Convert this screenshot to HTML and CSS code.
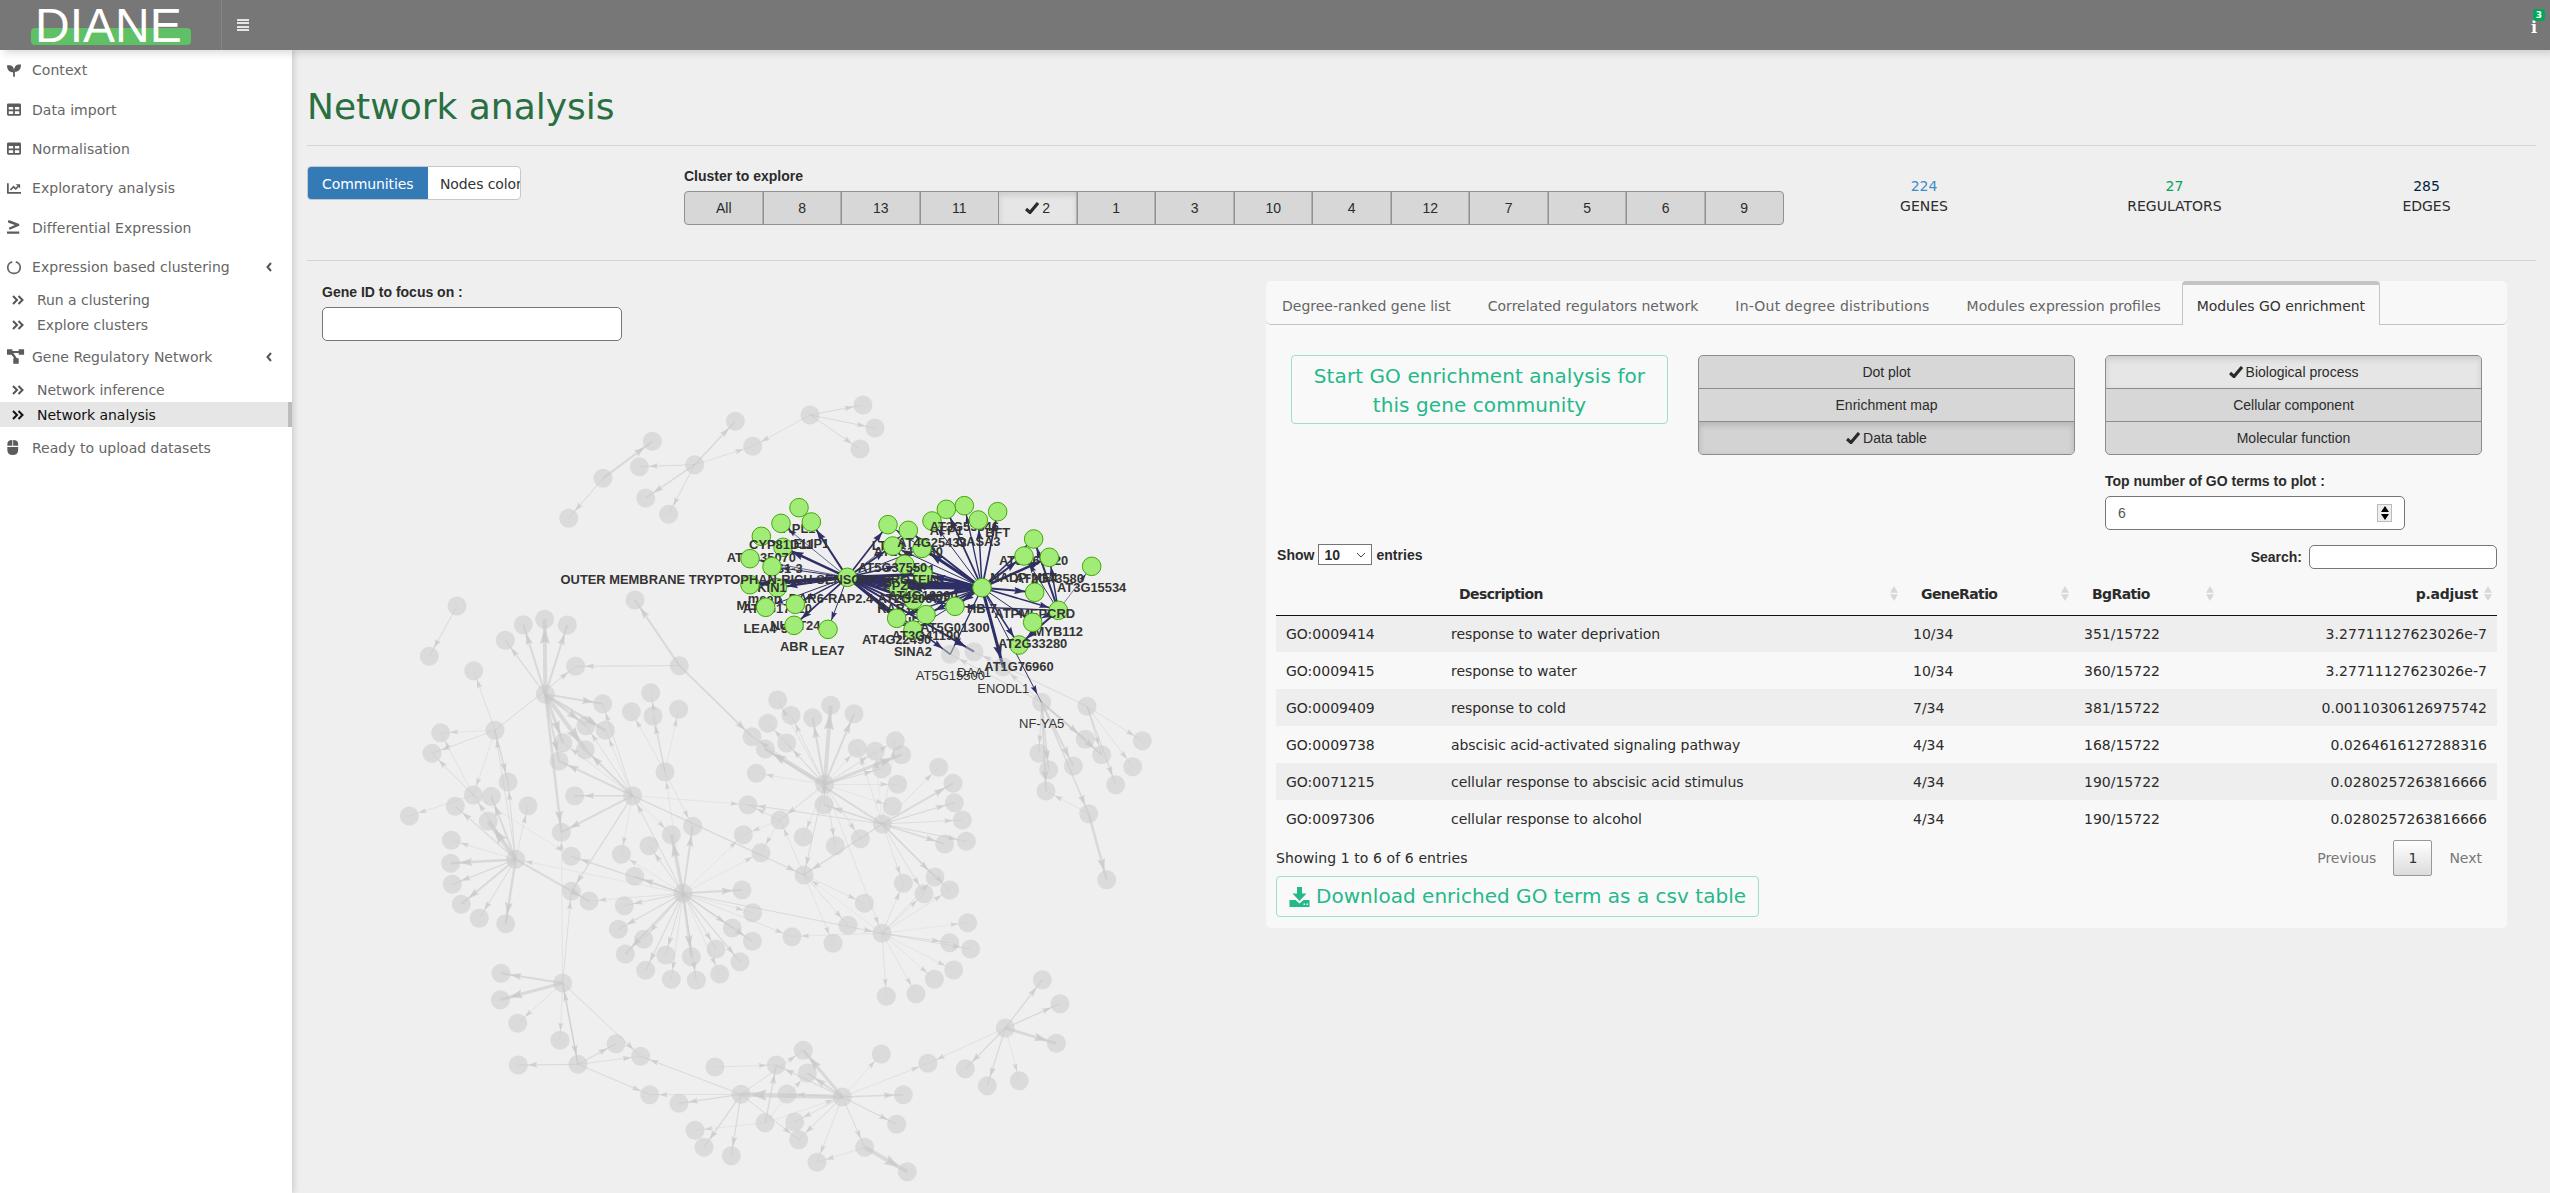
FILE: index.html
```html
<!DOCTYPE html>
<html lang="en">
<head>
<meta charset="utf-8">
<title>DIANE</title>
<link rel="stylesheet" href="styles.css">
</head>
<body>
<header class="topbar">
  <div class="logo"><span class="logo-text">DIANE</span></div>
  <div class="burger"><i></i><i></i><i></i><i></i></div>
  <div class="info"><b>i</b><span class="badge">3</span></div>
</header>
<div class="shell">
  <nav class="sidebar">
    <a class="item"><svg class="ico" viewBox="0 0 16 16"><path d="M0 2h2.500C6 2 8 4.500 8 8c0-4 2-7 6-7h2c0 5-2 8-7 8.500V15H7v-5C2.500 10 0 7 0 2z"/></svg>Context</a>
    <a class="item"><svg class="ico" viewBox="0 0 16 16"><path fill-rule="evenodd" d="M1.500 1h13Q16 1 16 2.500v11q0 1.500-1.500 1.500h-13Q0 15 0 13.500v-11Q0 1 1.500 1zM2 5v3h5V5zm7 0v3h5V5zM2 10v3h5v-3zm7 0v3h5v-3z"/></svg>Data import</a>
    <a class="item"><svg class="ico" viewBox="0 0 16 16"><path fill-rule="evenodd" d="M1.500 1h13Q16 1 16 2.500v11q0 1.500-1.500 1.500h-13Q0 15 0 13.500v-11Q0 1 1.500 1zM2 5v3h5V5zm7 0v3h5V5zM2 10v3h5v-3zm7 0v3h5v-3z"/></svg>Normalisation</a>
    <a class="item"><svg class="ico" viewBox="0 0 16 16"><path d="M0 2h2v10h14v2H0zM10 3h5v5l-1.600-1.600L10 9.800 7.500 7.300 4.500 10.300 3.200 9l4.300-4.300L10 7.200l2-2z"/></svg>Exploratory analysis</a>
    <a class="item"><svg class="ico" viewBox="0 0 16 16"><path d="M1 1l1-1.500 12 4.500v2L3 10.500 2 8.200 9 5 1.500 2.500zM0 12.500h14V15H0z"/></svg>Differential Expression</a>
    <a class="item"><svg class="ico" viewBox="0 0 16 16"><path class="line" d="M6 1.500A6.700 6.700 0 0 0 8 14.700A6.700 6.700 0 0 0 10 1.500"/></svg>Expression based clustering<svg class="chev" viewBox="0 0 6 10"><path d="M5 1L1.500 5 5 9"/></svg></a>
    <div class="subs">
      <a class="sub"><svg class="dbl" viewBox="0 0 12 10"><path d="M1 1l4 4-4 4M6.500 1l4 4-4 4"/></svg>Run a clustering</a>
      <a class="sub"><svg class="dbl" viewBox="0 0 12 10"><path d="M1 1l4 4-4 4M6.500 1l4 4-4 4"/></svg>Explore clusters</a>
    </div>
    <a class="item"><svg class="ico wide" viewBox="0 0 20 16"><path d="M0 0h6v2h7V0h6v6h-6V4H7l4 6h2v6H7v-6h1L5 6H0z"/></svg>Gene Regulatory Network<svg class="chev" viewBox="0 0 6 10"><path d="M5 1L1.500 5 5 9"/></svg></a>
    <div class="subs">
      <a class="sub"><svg class="dbl" viewBox="0 0 12 10"><path d="M1 1l4 4-4 4M6.500 1l4 4-4 4"/></svg>Network inference</a>
      <a class="sub active"><svg class="dbl" viewBox="0 0 12 10"><path d="M1 1l4 4-4 4M6.500 1l4 4-4 4"/></svg>Network analysis</a>
    </div>
    <a class="item last"><svg class="ico" viewBox="0 0 16 18"><path d="M0 7V5q0-5 6-5v7zM7 0q6 0 6 5v2H7zM0 8.500h13V12q0 6-6.500 6T0 12z"/></svg>Ready to upload datasets</a>
  </nav>
  <main class="content">
    <h1>Network analysis</h1>
    <section class="controls">
      <div class="toggle"><span class="on">Communities</span><span>Nodes color</span></div>
      <div class="cluster">
        <label>Cluster to explore</label>
        <div class="btn-row">
          <span>All</span><span>8</span><span>13</span><span>11</span><span class="sel"><svg class="check" viewBox="0 0 14 12"><path d="M1 7l4 3.500L13 1"/></svg>2</span><span>1</span><span>3</span><span>10</span><span>4</span><span>12</span><span>7</span><span>5</span><span>6</span><span>9</span>
        </div>
      </div>
      <div class="stats">
        <div><span class="blue">224</span>GENES</div>
        <div><span class="green">27</span>REGULATORS</div>
        <div><span class="navy">285</span>EDGES</div>
      </div>
    </section>
    <section class="work">
      <div class="graph">
        <label>Gene ID to focus on :</label>
        <input class="field">
        <svg id="network" viewBox="307 361 950 832" width="950" height="832"></svg>
      </div>
      <div class="panel">
        <div class="tabs">
          <a>Degree-ranked gene list</a><a>Correlated regulators network</a><a class="loose">In-Out degree distributions</a><a>Modules expression profiles</a><a class="current">Modules GO enrichment</a>
        </div>
        <div class="options">
          <button class="action">Start GO enrichment analysis for this gene community</button>
          <div class="stack"><span>Dot plot</span><span>Enrichment map</span><span class="pressed"><svg class="check" viewBox="0 0 14 12"><path d="M1 7l4 3.500L13 1"/></svg>Data table</span></div>
          <div>
            <div class="stack"><span class="sel"><svg class="check" viewBox="0 0 14 12"><path d="M1 7l4 3.500L13 1"/></svg>Biological process</span><span>Cellular component</span><span>Molecular function</span></div>
            <label>Top number of GO terms to plot :</label>
            <div class="field number">6<span class="spin"><i class="up"></i><i class="down"></i></span></div>
          </div>
        </div>
        <div class="filter">
          <div class="length">Show <span class="select">10<svg viewBox="0 0 10 6"><path d="M1 1l4 4 4-4"/></svg></span> entries</div>
          <div class="search">Search:<input></div>
        </div>
        <table>
          <thead><tr><th></th><th>Description<i class="sort"></i></th><th>GeneRatio<i class="sort"></i></th><th>BgRatio<i class="sort"></i></th><th class="num">p.adjust<i class="sort"></i></th></tr></thead>
          <tbody>
            <tr><td>GO:0009414</td><td>response to water deprivation</td><td>10/34</td><td>351/15722</td><td class="num">3.27711127623026e-7</td></tr>
            <tr><td>GO:0009415</td><td>response to water</td><td>10/34</td><td>360/15722</td><td class="num">3.27711127623026e-7</td></tr>
            <tr><td>GO:0009409</td><td>response to cold</td><td>7/34</td><td>381/15722</td><td class="num">0.00110306126975742</td></tr>
            <tr><td>GO:0009738</td><td>abscisic acid-activated signaling pathway</td><td>4/34</td><td>168/15722</td><td class="num">0.0264616127288316</td></tr>
            <tr><td>GO:0071215</td><td>cellular response to abscisic acid stimulus</td><td>4/34</td><td>190/15722</td><td class="num">0.0280257263816666</td></tr>
            <tr><td>GO:0097306</td><td>cellular response to alcohol</td><td>4/34</td><td>190/15722</td><td class="num">0.0280257263816666</td></tr>
          </tbody>
        </table>
        <div class="foot">
          <span>Showing 1 to 6 of 6 entries</span>
          <div class="pager"><span>Previous</span><b>1</b><span>Next</span></div>
        </div>
        <button class="download"><svg viewBox="0 0 20 20"><path fill-rule="evenodd" d="M7.500 0h5v6.500H17L10 14 3 6.500h4.500zM0 13h6l4 3.500 4-3.500h6v7H0zM14 16.500v1.500h1.500v-1.500zm3 0v1.500h1.500v-1.500z"/></svg>Download enriched GO term as a csv table</button>
      </div>
    </section>
  </main>
</div>
<script src="network.js"></script>
</body>
</html>
```
FILE: styles.css
```css
* { box-sizing: border-box; }
body { margin: 0; height: 1193px; overflow: hidden; background: #efefef; color: #2b2b2b; font: 14px/20px "DejaVu Sans", Verdana, sans-serif; }
label, .length, .search { font-family: "Liberation Sans", Arial, sans-serif; font-weight: bold; }
label { display: block; }

.topbar { position: relative; z-index: 2; display: flex; align-items: center; height: 50px; background: #777; box-shadow: 4px 3px 8px rgba(0,0,0,.15); }
.logo { width: 222px; height: 50px; padding-left: 31px; border-right: 1px solid #858585; }
.logo::before { content: ""; display: block; width: 160px; height: 17px; margin-top: 28px; border-radius: 4px; background: #5fc065; }
.logo-text { position: relative; top: -44px; left: 4px; display: block; font: 48px/50px "Liberation Sans", Arial, sans-serif; color: #fff; }
.burger { display: grid; gap: 1.500px; width: 12px; margin-left: 15px; }
.burger i { height: 2px; background: #e4e4e4; }
.info { position: relative; margin: 5px 13px 0 auto; color: #fff; font: bold 16px/16px "DejaVu Serif", serif; }
.badge { position: absolute; left: 2px; top: -11px; width: 12px; height: 12px; border-radius: 3px; background: #00a65a; font: bold 9px/12px "DejaVu Sans", sans-serif; text-align: center; }

.shell { display: grid; grid-template-columns: 292px minmax(0, 1fr); height: 1143px; }
.sidebar { background: #fff; box-shadow: 2px 0 6px rgba(0,0,0,.15); color: #666; }
.item { display: flex; align-items: center; height: 39.400px; padding-left: 7px; padding-top: 1px; letter-spacing: .05px; }
.ico { width: 14px; height: 15px; margin-right: 11px; fill: #5c5c5c; overflow: visible; }
.ico.wide { width: 18px; margin-right: 7px; }
.line { fill: none; stroke: #666; stroke-width: 2; }
.chev { width: 6px; height: 10px; margin-left: auto; margin-right: 20px; fill: none; stroke: #555; stroke-width: 2; }
.subs { height: 51px; padding-top: 1px; }
.subs + .item { height: 39px; padding-top: 0; letter-spacing: 0; }
.sub { display: flex; align-items: center; height: 25px; padding-left: 12px; letter-spacing: -.05px; }
.subs + .last { padding-top: 2px; }
.dbl { width: 12px; height: 10px; margin-right: 13px; fill: none; stroke: #555; stroke-width: 2; }
.sub.active { background: #e6e6e6; border-right: 4px solid #bcbcbc; color: #111; }
.active .dbl { stroke: #111; }

.content { padding: 0 14px 0 15px; }
h1 { height: 96px; margin: 0; padding-top: 37px; border-bottom: 1px solid #d4d4d4; font-size: 36px; font-weight: normal; line-height: 40px; color: #2a6f42; }
.controls { display: grid; grid-template-columns: 377px 1100px 1fr; height: 115px; border-bottom: 1px solid #d4d4d4; }
.toggle { display: flex; width: 214px; height: 34px; margin-top: 20px; border: 1px solid #c8c8c8; border-radius: 4px; background: #fff; overflow: hidden; line-height: 34px; white-space: nowrap; }
.toggle span { padding-left: 12px; letter-spacing: -.1px; color: #333; }
.toggle .on { flex: 0 0 120px; padding-left: 14px; background: #337ab7; color: #fff; letter-spacing: -.1px; }
.cluster label { margin: 20px 0 5px; }
.btn-row { display: flex; height: 34px; border: 1px solid #929292; border-radius: 4px; background: #d7d7d7; overflow: hidden; font: 14px/32px "Liberation Sans", Arial, sans-serif; }
.btn-row span { flex: 1 1 0; text-align: center; border-left: 1px solid #929292; box-shadow: -1px 0 0 #b0b0b0; }
.btn-row span:first-child { border: 0; }
.btn-row .sel, .stack .sel { background: #e6e6e6; box-shadow: inset 0 3px 6px rgba(0,0,0,.12); }
.check { width: 14px; height: 12px; margin-right: 3px; vertical-align: -1px; fill: none; stroke: #2b2b2b; stroke-width: 3.200; }
.stats { display: grid; grid-template-columns: 280px 221px 283px; width: 784px; padding-top: 30px; text-align: center; }
.stats span { display: block; }
.blue { color: #428bca; } .green { color: #00a65a; } .navy { color: #001f3f; }

.work { display: grid; grid-template-columns: 959px 1241px; padding-top: 20px; }
.graph label { margin: 1px 0 5px 15px; }
.field { display: block; width: 300px; height: 34px; border: 1px solid #767676; border-radius: 5px; background: #fff; }
.graph .field { margin-left: 15px; }
#network { display: block; margin-top: 20px; }
.nlabel { font: bold 12.900px "Liberation Sans", Arial, sans-serif; fill: #343434; text-anchor: middle; }
.nlabel.thin { font-weight: normal; font-size: 13px; }
.node { fill: rgba(200,200,200,.5); }
.node.hot { fill: #a1ec76; stroke: #41a906; }
.edge { stroke: #c8c8c8; opacity: .55; }
.edge.hot { stroke: #2f2f67; opacity: 1; }
.tip { fill: #c8c8c8; opacity: .7; }
.tip.hot { fill: #2f2f67; opacity: 1; }

.panel { height: 647px; border-radius: 5px; background: #f8f8f8; }
.tabs { display: flex; gap: 5px; height: 44px; border-bottom: 1px solid #c4c4c4; border-radius: 5px; color: #666; white-space: nowrap; }
.tabs a { height: 43px; padding: 15px 16px 0; letter-spacing: 0; }
.tabs .loose { letter-spacing: .2px; }
.tabs .current { height: 44px; padding: 11px 14px 0; border: 1px solid #c4c4c4; border-top-width: 4px; border-bottom: 0; border-radius: 4px 4px 0 0; background: #f8f8f8; color: #333; letter-spacing: -.05px; }
.options { display: grid; grid-template-columns: 377px 377px 377px; column-gap: 30px; height: 205px; padding: 30px 0 0 25px; align-items: start; }
button { font: 20px/29px "DejaVu Sans", Verdana, sans-serif; color: #25b88a; border: 1px solid #9fdec8; border-radius: 4px; background: #f9f9f9; }
.action { height: 69px; padding: 5px 15px 3px; letter-spacing: .08px; }
.stack { border: 1px solid #8c8c8c; border-radius: 5px; background: #d7d7d7; overflow: hidden; text-align: center; font: 14px/32px "Liberation Sans", Arial, sans-serif; }
.stack span { display: block; height: 33px; border-bottom: 1px solid #8c8c8c; }
.stack span:last-child { height: 32px; border: 0; }
.stack .pressed { background: #d3d3d3; box-shadow: inset 0 3px 6px rgba(0,0,0,.15); }
.options label { margin: 16px 0 5px; }
.number { display: flex; justify-content: space-between; align-items: center; padding: 0 12px; color: #555; font: 14px "Liberation Sans", Arial, sans-serif; }
.spin { display: grid; gap: 2px; width: 15px; padding: 1px 0; justify-items: center; border: 1px solid #bbb; background: #eee; }
.spin i { border: 4px solid transparent; }
.up { border-top: 0 !important; border-bottom: 6px solid #000 !important; }
.down { border-bottom: 0 !important; border-top: 6px solid #000 !important; }
.filter { display: flex; justify-content: space-between; height: 44px; padding: 15px 10px 0 11px; }
.length { margin-top: -1px; letter-spacing: .05px; }
.select { display: inline-flex; align-items: center; justify-content: space-between; width: 54px; height: 21px; padding: 0 5px; border: 1px solid #767676; background: #fff; }
.select svg { width: 10px; height: 6px; fill: none; stroke: #444; }
.search { display: flex; gap: 7px; line-height: 24px; }
.search input { width: 188px; height: 24px; border: 1px solid #767676; border-radius: 5px; background: #fff; }
table { width: 1221px; margin-left: 10px; border-collapse: collapse; table-layout: fixed; }
th { position: relative; height: 41px; padding: 0 18px 1px; border-bottom: 1px solid #111; text-align: left; letter-spacing: -.6px; }
th:nth-child(1) { width: 165px; } th:nth-child(2) { width: 462px; } th:nth-child(3) { width: 171px; } th:nth-child(4) { width: 145px; }
th.num { padding-right: 19px; letter-spacing: -.3px; }
.sort { position: absolute; right: 5px; top: 12px; height: 15px; width: 8px; background: #d8d8d8; clip-path: polygon(50% 0, 100% 45%, 0 45%, 0 55%, 100% 55%, 50% 100%, 0 55%, 0 45%); }
td { height: 37px; padding: 0 10px; letter-spacing: 0; }
tbody tr:nth-child(odd) { background: #eee; }
td:nth-child(2) { letter-spacing: -.05px; }
.num { text-align: right; }
td.num { letter-spacing: .04px; }
.foot { display: flex; justify-content: space-between; height: 39px; padding: 3px 25px 0 10px; line-height: 36px; letter-spacing: .1px; }
.pager { display: flex; gap: 17px; color: #777; letter-spacing: 0; }
.pager b { width: 39px; height: 36px; border: 1px solid #999; border-radius: 2px; background: linear-gradient(#fff, #dcdcdc); color: #333; font-weight: normal; text-align: center; line-height: 34px; }
.download { display: flex; align-items: center; gap: 6px; width: 483px; height: 41px; margin-left: 10px; padding: 0 12px; letter-spacing: .03px; white-space: nowrap; }
.download svg { width: 21px; height: 20px; fill: #25b88a; flex: none; }
```
FILE: network.js
```js
// Regions of the layout: origin in page pixels, coordinates in thirds of a pixel.
// Each star is [hub x, hub y, [target x, target y, edge width], ...].
const regions = [
  { at: [380, 380], stars: [
    [669,295,[817,184,2],[566,415,1]],
    [944,254,[1066,124,1.4],[778,260,1],[797,354,1.4],[866,403,1],[1118,199,.7]],
    [1290,105,[1485,144,1],[1449,75,1],[1440,207,1],[1118,199,.8]],
    [231,678,[148,829,1]],
    [898,857,[765,660,2],[587,859,1],[1116,1070,1.8]],
    [496,943,[376,781,1.2],[430,734,2],[494,718,4],[562,735,2],[668,971,2],[618,1037,2.5],[676,1051,2.5],[549,1088,3],[616,1109,4],[537,1143,2],[544,1357,2.5]],
    [345,1051,[281,872,.8],[182,1058,.5],[156,1120,.8],[384,1206,1.5],[280,1245,.6],[587,859,1]]
  ]},
  { at: [380, 740], stars: [
    [407,358,[226,199,1.2],[334,169,2],[325,244,4],[214,301,.6],[212,370,2.5],[217,433,1.2],[244,493,2],[298,535,1],[377,551,2.5],[444,197,.7],[384,126,1],[627,483,2],[280,165,1],[345,-29,.8]],
    [280,165,[88,228,.6],[156,40,1],[182,-22,.6],[574,349,.5]],
    [758,167,[537,63,2],[584,167,1.5],[544,277,1.8],[574,454,1.2],[724,343,.5],[874,284,.5],[1104,194,.5],[616,29,2],[549,8,.7],[618,-43,.8],[676,-29,.6],[668,-109,.8],[1272,405,1.2]],
    [909,460,[938,259,2],[874,284,3],[807,317,1],[758,167,1],[724,343,.5],[574,349,1.2],[407,358,.5],[764,409,1.5],[627,483,.6],[733,497,1],[715,568,1.2],[736,642,2],[791,598,1],[797,691,1.2],[857,645,1],[874,718,.7],[934,650,2.5],[949,721,1],[1019,702,.6],[1008,627,1],[1080,665,1.2],[1117,604,1.5],[1057,564,1],[1118,518,.5],[1086,450,2],[1090,284,.5],[1143,338,.5],[855,96,.5],[1236,590,.6],[1506,580,1]],
    [855,96,[754,-85,.6],[819,-72,1],[896,-92,.5],[938,259,.6],[812,-142,.6]],
    [548,729,[363,700,2],[361,779,3],[413,850,.7],[540,901,.6],[594,973,1.5],[782,949,1],[574,454,.8],[544,277,.5]],
    [594,973,[415,975,1.2],[708,911,1.2],[782,949,.7],[809,1064,1],[548,729,1]],
    [1083,1063,[782,949,1],[809,1064,.7],[897,1090,1.2],[972,1222,1.3],[1054,1247,1.2]],
    [1155,1148,[945,1171,.5]]
  ]},
  { at: [700, 940], stars: [
    [123,463,[296,599,1],[310,331,.8]],
    [427,471,[123,463,4.5],[310,331,3],[322,399,2],[229,375,1.2],[261,462,.8],[544,342,.5],[684,370,.6],[610,464,1.5],[590,553,1.2],[494,622,1],[351,667,.7],[284,546,.8],[296,599,1]],
    [196,548,[229,375,1.3],[322,399,.5],[427,471,.5]],
    [494,622,[622,695,4],[351,667,.6]],
    [45,381,[229,375,.6]],
    [916,264,[1027,119,1.3],[1080,191,1.2],[1069,310,3],[796,386,1.2],[862,437,1.2],[958,422,.5],[684,370,.6]]
  ]},
  { at: [780, 640], stars: [
    [134,433,[152,196,4],[98,233,2],[222,221,2],[33,226,.8],[-7,180,.7],[-36,250,.7],[20,309,1],[232,325,.5],[286,334,.5],[346,302,.5],[365,344,3],[305,386,1],[353,433,.6],[337,499,.4],[132,494,1],[241,596,.8],[166,617,.8],[70,591,.5],[0,540,1],[72,704,1],[-84,290,1],[-44,327,3],[-71,400,.5],[306,880,.6]],
    [0,540,[-110,584,.5],[-57,638,.6],[-96,494,.8]],
    [307,552,[476,382,.7],[519,430,2],[523,488,1.2],[547,540,.8],[559,604,1],[494,612,1.5],[465,711,1.3],[509,750,1],[432,761,.9],[370,730,.7],[132,494,1.5],[-44,327,2],[72,704,1.3],[232,325,.6],[346,302,.5],[286,334,.4],[-96,494,1]],
    [72,704,[253,790,.6],[204,856,.8],[159,910,.5],[0,540,.6]],
    [306,880,[563,848,.4],[509,908,.9],[572,927,.8],[521,990,.5],[463,1018,.5],[408,1061,.6],[319,1069,.6],[35,889,.5],[72,704,.4],[370,730,.7],[432,761,.7],[509,750,.6],[465,711,.6]],
    [785,187,[777,340,1],[806,389,1.5],[798,453,2],[880,378,2],[916,298,1.5],[965,344,2],[926,521,1.5],[669,81,1],[511,43,1]],
    [921,199,[1087,302,.7],[1058,380,.7],[1007,434,1.3],[965,344,1],[582,35,1]],
    [926,521,[798,453,.6],[980,719,2.5]]
  ]}
];

// Selected community, same units.
const hot = { at: [740, 490], stars: [
  [322,262,[214,96,2],[123,100,.7],[129,172,2.5],[64,139,.7],[30,206,.7],[96,230,1],[30,284,4],[112,293,2],[77,352,1],[166,343,1.5],[162,406,1.8],[264,418,1],[444,104,1.7],[458,168,1.8],[505,121,.8],[546,175,1],[494,223,1.5],[549,253,3],[475,291,3],[520,330,3],[470,385,2.5],[519,420,2],[558,374,2],[645,349,1.5],[726,293,6],[631,493,1.5],[702,485,2]],
  [726,293,[444,104,1],[505,121,2],[458,168,1],[546,175,3],[494,223,1.5],[549,253,3],[475,291,4],[520,330,3],[470,385,1.5],[519,420,1],[558,374,2],[645,349,2],[576,93,1],[619,58,1.8],[673,47,1.3],[715,90,1.5],[773,65,1.8],[881,147,1.5],[852,198,2],[928,202,2.5],[884,307,2],[955,361,1.5],[878,397,1],[837,465,1.6],[790,533,3],[905,638,1],[631,493,1.3],[322,262,3]],
  [955,361,[852,198,1],[928,202,1.5],[881,147,2],[1055,229,.6],[878,397,1],[837,465,2],[645,349,1.3]]
]};

const genes = [
  [475,291,"RAB18"],[520,330,"LIF1"],[444,104,"LTI30"],[505,121,"AT1G14280"],[546,175,"RD1"],[129,172,"PIS1-3"],[64,139,"AT3G35070"],[177,53,"APL1"],[123,100,"CYP81D11"],
  [214,96,"ELIP1"],[112,293,"AT1G17620"],[96,230,"KIN1"],[494,223,"PP2CA"],[549,253,"AT4G19390"],[322,262,"mean_DAR6-RAP2.4-AT2G20670"],
  [30,284,"MLP"],[30,206,"OUTER MEMBRANE TRYPTOPHAN-RICH SENSORY PROTEIN"],[166,343,"NUDT24"],[77,352,"LEA4-5"],[162,406,"ABR"],[264,418,"LEA7"],
  [458,168,"AT5G37550"],[619,58,"AFP1"],[576,93,"AT4G25433"],[673,47,"AT3G55646"],[715,90,"OASA3"],[773,65,"BFT"],
  [470,385,"AT4G22490"],[519,420,"SINA2"],[558,374,"AT3G41190"],[645,349,"AT5G01300"],[881,147,"AT5G67920"],[928,202,"AT2G43580"],[852,198,"NADP-ME4"],
  [726,293,"HB-7"],[1055,229,"AT3G15534"],[955,361,"MYB112"],[884,307,"ATPMEPCRD"],[837,465,"AT1G76960"],[878,397,"AT2G33280"],
  [631,493,"AT5G15500",1],[702,485,"DAA1",1],[790,533,"ENODL1",1],[905,638,"NF-YA5",1]
];

const svg = document.getElementById("network");
function add(tag, attrs, text) {
  const el = document.createElementNS("http://www.w3.org/2000/svg", tag);
  for (const k in attrs) el.setAttribute(k, attrs[k]);
  if (text) el.textContent = text;
  svg.appendChild(el);
}
const place = (at, x, y) => [at[0] + x / 3, at[1] + y / 3];

function edge(a, b, w, cls) {
  add("line", { class: "edge" + cls, x1: a[0], y1: a[1], x2: b[0], y2: b[1], "stroke-width": w });
  const d = Math.hypot(b[0] - a[0], b[1] - a[1]);
  const ux = (b[0] - a[0]) / d, uy = (b[1] - a[1]) / d;
  const len = 7 + w * 2, half = 2 + w * .8;
  const tx = b[0] - ux * 9.5, ty = b[1] - uy * 9.5;
  const bx = tx - ux * len, by = ty - uy * len;
  const nx = tx - ux * len * .85, ny = ty - uy * len * .85;
  add("path", { class: "tip" + cls, d: `M${tx} ${ty}L${bx - uy * half} ${by + ux * half}L${nx} ${ny}L${bx + uy * half} ${by - ux * half}z` });
}

const nodes = [];
function remember(p) {
  if (!nodes.some(q => Math.hypot(p[0] - q[0], p[1] - q[1]) < 4)) nodes.push(p);
}
for (const r of regions) for (const [x, y, ...targets] of r.stars) {
  const hub = place(r.at, x, y);
  remember(hub);
  for (const [tx, ty, w] of targets) {
    const t = place(r.at, tx, ty);
    remember(t);
    edge(hub, t, w, "");
  }
}
for (const [x, y, ...targets] of hot.stars)
  for (const [tx, ty, w] of targets) edge(place(hot.at, x, y), place(hot.at, tx, ty), w, " hot");
for (const p of nodes) add("circle", { class: "node", cx: p[0], cy: p[1], r: 9.5 });
for (const [x, y, name, faded] of genes) {
  const p = place(hot.at, x, y);
  if (!faded) add("circle", { class: "node hot", cx: p[0], cy: p[1], r: 9.3 });
  add("text", { class: "nlabel" + (faded ? " thin" : ""), x: p[0], y: p[1] + 25.5 }, name);
}
```
